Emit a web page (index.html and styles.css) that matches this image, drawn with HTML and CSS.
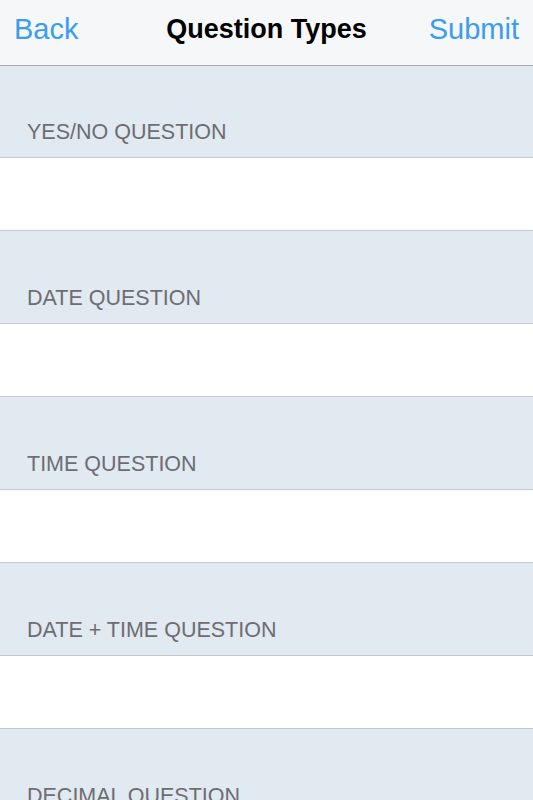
FILE: index.html
```html
<!DOCTYPE html>
<html>
<head>
<meta charset="utf-8">
<link rel="stylesheet" href="styles.css">
</head>
<body>
<header class="nav">
  <span class="nav-btn nav-left">Back</span>
  <span class="nav-title">Question Types</span>
  <span class="nav-btn nav-right">Submit</span>
</header>
<main class="list">
  <div class="section-header">YES/NO QUESTION</div>
  <div class="cell"></div>
  <div class="section-header">DATE QUESTION</div>
  <div class="cell"></div>
  <div class="section-header">TIME QUESTION</div>
  <div class="cell"></div>
  <div class="section-header">DATE + TIME QUESTION</div>
  <div class="cell"></div>
  <div class="section-header">DECIMAL QUESTION</div>
  <div class="cell"></div>
</main>
</body>
</html>
```
FILE: styles.css
```css
html, body {
  margin: 0;
  padding: 0;
  background: #e1e9f1;
  font-family: "Liberation Sans", Arial, sans-serif;
  overflow: hidden;
}
.nav {
  height: 65px;
  background: #f6f7f8;
  border-bottom: 1px solid #a8abb0;
  display: grid;
  grid-template-columns: 1fr auto 1fr;
  align-items: center;
  padding: 0 14px;
  box-sizing: content-box;
}
.nav-btn {
  color: #3a9cf4;
  font-size: 29px;
  margin-top: -6px;
}
.nav-left {
  justify-self: start;
}
.nav-right {
  justify-self: end;
}
.nav-title {
  color: #000;
  font-size: 27px;
  font-weight: bold;
  margin-top: -6px;
}
.list {
  display: flex;
  flex-direction: column;
}
.section-header {
  height: 93px;
  flex-shrink: 0;
  box-sizing: border-box;
  border-bottom: 1px solid #c8c7cc;
  background: #e1e9f1;
  color: #6d6d72;
  font-size: 21.5px;
  display: flex;
  align-items: flex-end;
  padding: 0 0 12px 27px;
}
.section-header:first-child {
  height: 92px;
}
.cell {
  height: 73px;
  flex-shrink: 0;
  box-sizing: border-box;
  background: #fff;
  border-bottom: 1px solid #c8c7cc;
}
```
